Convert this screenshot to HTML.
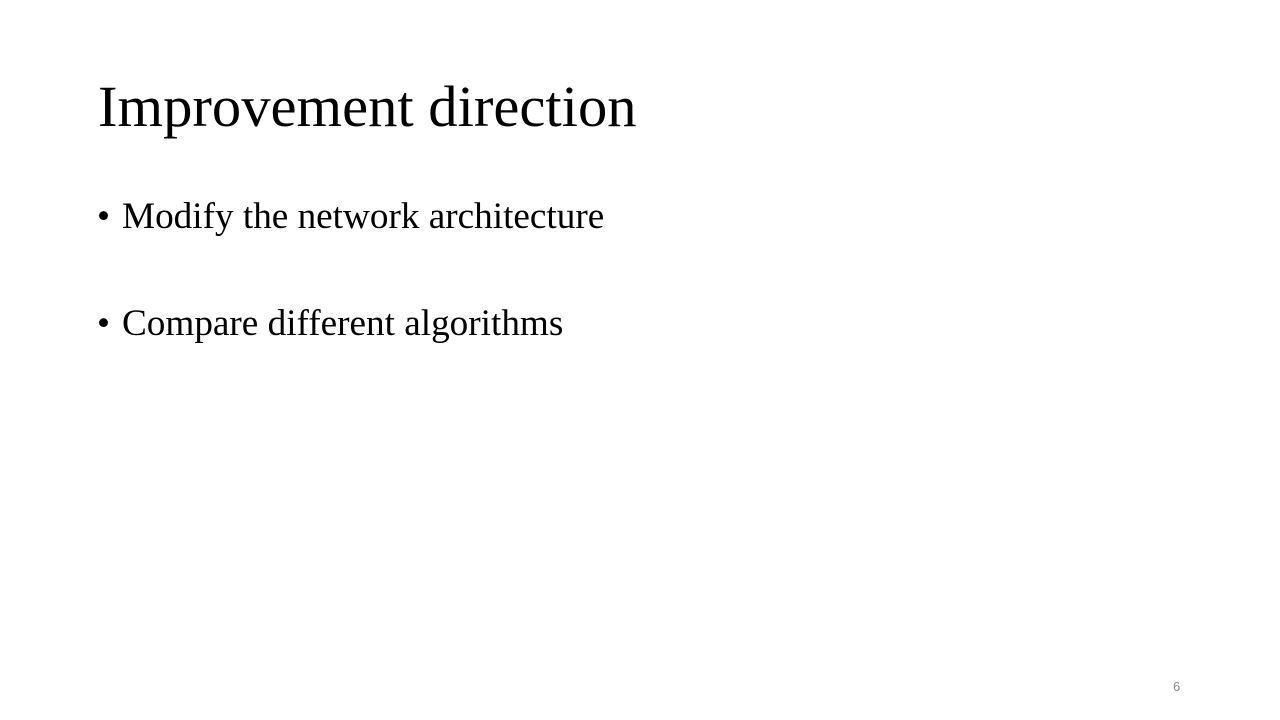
<!DOCTYPE html>
<html><head><style>
body{margin:0;width:1280px;height:720px;background:#fff;position:relative;overflow:hidden;font-family:"Liberation Serif",serif;color:#000}
.t{position:absolute;left:98px;top:71px;font-size:58.6px;line-height:72px;white-space:nowrap}
.b{position:absolute;left:122px;font-size:37.2px;line-height:42px;white-space:nowrap}
.d{position:absolute;left:97px;font-size:37.2px;line-height:42px}
.n{position:absolute;left:1173px;top:679px;font-size:13px;color:#898989;font-family:"Liberation Sans",sans-serif}
</style></head><body>
<div class="t">Improvement direction</div>
<div class="d" style="top:196px">•</div>
<div class="b" style="top:196px">Modify the network architecture</div>
<div class="d" style="top:303px">•</div>
<div class="b" style="top:303px">Compare different algorithms</div>
<div class="n">6</div>
</body></html>
